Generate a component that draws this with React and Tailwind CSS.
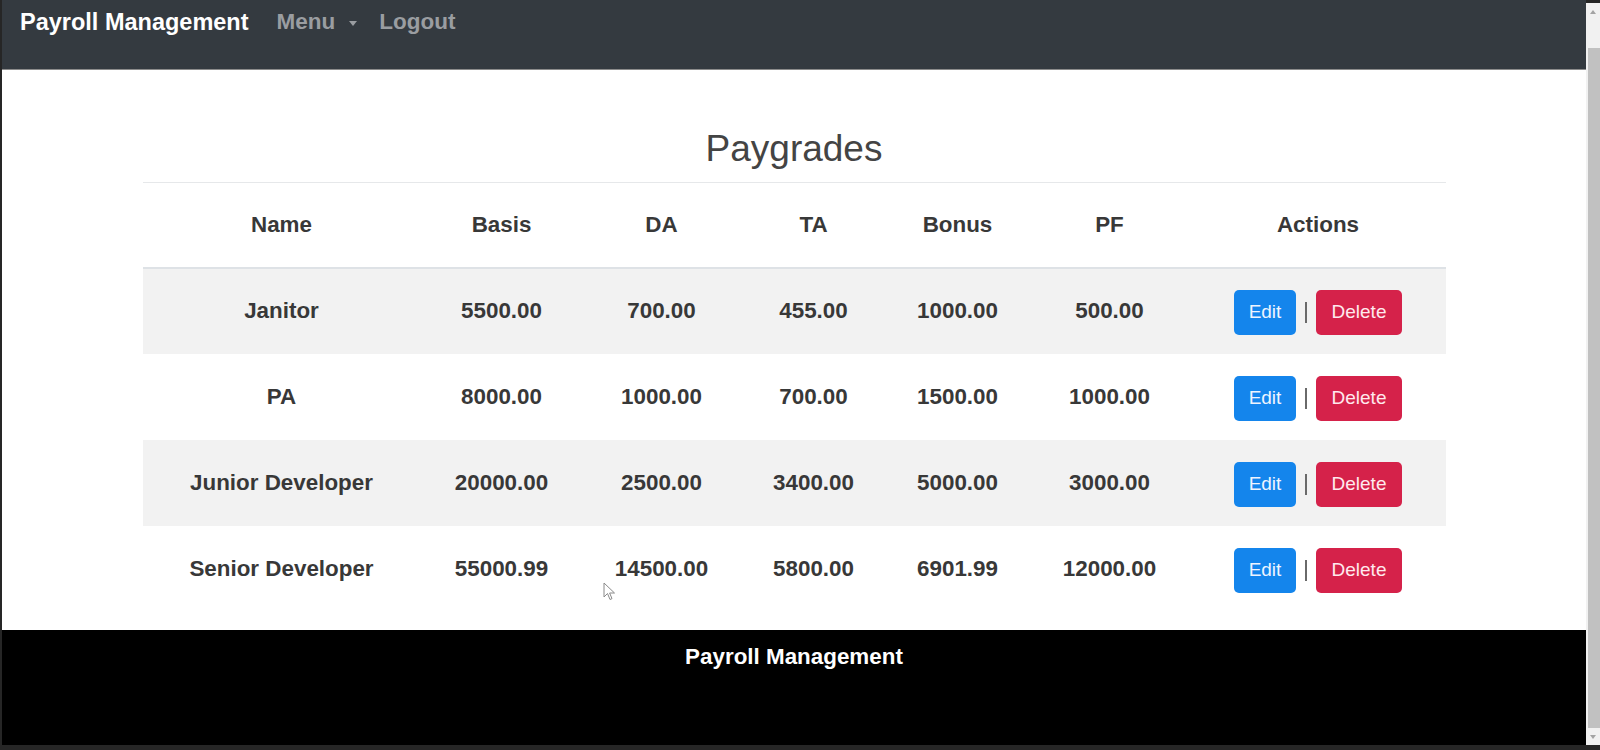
import React from 'react';

const paygrades = [
  { name: 'Janitor', basis: '5500.00', da: '700.00', ta: '455.00', bonus: '1000.00', pf: '500.00' },
  { name: 'PA', basis: '8000.00', da: '1000.00', ta: '700.00', bonus: '1500.00', pf: '1000.00' },
  { name: 'Junior Developer', basis: '20000.00', da: '2500.00', ta: '3400.00', bonus: '5000.00', pf: '3000.00' },
  { name: 'Senior Developer', basis: '55000.99', da: '14500.00', ta: '5800.00', bonus: '6901.99', pf: '12000.00' },
];

function Navbar() {
  return (
    <nav className="h-[70px] bg-[#343a40] border-b border-[#8c8c8c] flex items-start pt-2 pl-[18px] leading-[28px] font-bold">
      <span className="text-[23.5px] text-white">Payroll Management</span>
      <span className="ml-[28px] text-[22.5px] text-[#9a9da1] flex items-center">
        Menu
        <span className="ml-[14px] mt-[2px] w-0 h-0 border-l-[4px] border-r-[4px] border-t-[5px] border-l-transparent border-r-transparent border-t-[#9a9da1]" />
      </span>
      <span className="ml-[22px] text-[22.5px] text-[#9a9da1]">Logout</span>
    </nav>
  );
}

function Actions() {
  return (
    <div className="flex items-center justify-center gap-[9px] pt-[3px] font-normal">
      <button className="w-[62px] h-[45px] rounded-[5px] bg-[#1485ec] text-[#eef4ff] text-[19px]">Edit</button>
      <span className="w-[2px] h-[21px] bg-[#6a6a6a]" />
      <button className="w-[86px] h-[45px] rounded-[5px] bg-[#d5224a] text-[#ffe9ee] text-[19px]">Delete</button>
    </div>
  );
}

function PaygradeTable() {
  return (
    <table className="mx-auto w-[1303px] table-fixed border-collapse text-[22.4px] font-bold text-[#383838]">
      <colgroup>
        <col className="w-[278px]" />
        <col className="w-[162px]" />
        <col className="w-[158px]" />
        <col className="w-[146px]" />
        <col className="w-[142px]" />
        <col className="w-[162px]" />
        <col className="w-[255px]" />
      </colgroup>
      <thead>
        <tr className="h-[85px] border-t border-b-2 border-t-[#e6e8ea] border-b-[#dee2e6]">
          {['Name', 'Basis', 'DA', 'TA', 'Bonus', 'PF', 'Actions'].map((h) => (
            <th key={h} className="text-center font-bold">{h}</th>
          ))}
        </tr>
      </thead>
      <tbody>
        {paygrades.map((p, i) => (
          <tr key={p.name} className={i % 2 === 0 ? 'h-[86px] bg-[#f2f2f2]' : 'h-[86px] bg-white'}>
            <td className="text-center">{p.name}</td>
            <td className="text-center">{p.basis}</td>
            <td className="text-center">{p.da}</td>
            <td className="text-center">{p.ta}</td>
            <td className="text-center">{p.bonus}</td>
            <td className="text-center">{p.pf}</td>
            <td>
              <Actions />
            </td>
          </tr>
        ))}
      </tbody>
    </table>
  );
}

function Scrollbar() {
  return (
    <div className="w-[14px] flex flex-col pt-[3px] pb-[5px]">
      <div className="h-[45px] bg-[#f1f1f1] flex justify-center pt-[7px]">
        <span className="w-0 h-0 border-l-[3px] border-r-[3px] border-b-[4px] border-l-transparent border-r-transparent border-b-[#a3a3a3]" />
      </div>
      <div className="flex-1 bg-[#f1f1f1] pl-[2px]">
        <div className="h-full bg-[#c1c1c1]" />
      </div>
      <div className="h-[17px] bg-[#f1f1f1] flex justify-center items-center">
        <span className="w-0 h-0 border-l-[3px] border-r-[3px] border-t-[4px] border-l-transparent border-r-transparent border-t-[#a3a3a3]" />
      </div>
    </div>
  );
}

export default function App() {
  return (
    <div className="relative w-[1600px] h-[750px] flex bg-[#262626] overflow-hidden font-['Liberation_Sans',Arial,sans-serif]">
      <div className="flex-1 ml-[2px] mb-[5px] flex flex-col bg-white">
        <Navbar />
        <main className="flex-1 pt-[57px]">
          <h1 className="text-center text-[37px] leading-[44px] text-[#444] mb-[11px]">Paygrades</h1>
          <PaygradeTable />
        </main>
        <footer className="h-[115px] bg-black pt-[14px] text-center">
          <span className="text-[22.4px] leading-[26px] font-bold text-white">Payroll Management</span>
        </footer>
      </div>
      <Scrollbar />

      {/* mouse pointer caught in the screenshot */}
      <svg className="absolute left-[603px] top-[582px]" width="13" height="19" viewBox="0 0 13 19">
        <path d="M1 1 L1 15 L4.5 11.5 L7 17.5 L9 16.6 L6.6 11 L11.5 11 Z" fill="#fff" stroke="#8a8a8a" strokeWidth="1" strokeLinejoin="round" />
      </svg>
    </div>
  );
}
